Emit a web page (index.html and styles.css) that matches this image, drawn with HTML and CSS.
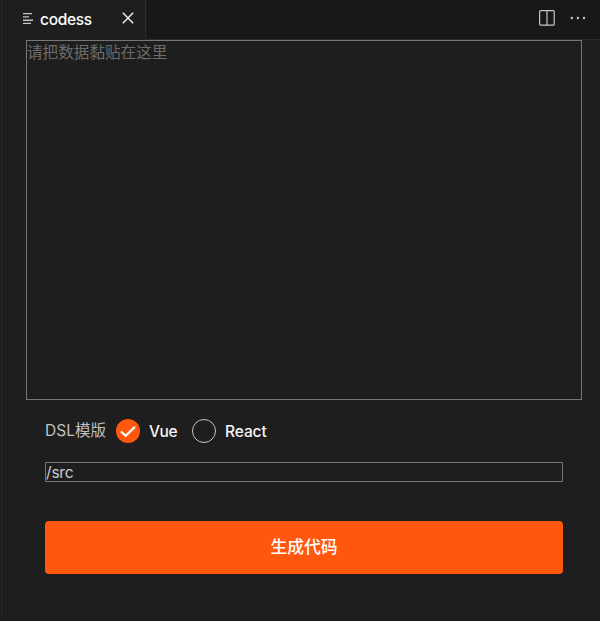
FILE: index.html
```html
<!DOCTYPE html>
<html lang="zh-CN">
<head>
<meta charset="utf-8">
<title>codess</title>
<link rel="stylesheet" href="styles.css">
</head>
<body>
<div class="window">
  <header class="tabbar">
    <div class="tab">
      <svg class="list-icon" width="12" height="12" viewBox="0 0 12 12"><path d="M0 .6h9M0 3.9h6M0 7.2h10M0 10.4h8"/></svg>
      <span class="tab-title">codess</span>
      <svg class="close-icon" width="12" height="12" viewBox="0 0 12 12"><path d="M.8.8l10.4 10.4M11.2.8L.8 11.2"/></svg>
    </div>
    <div class="actions">
      <svg width="16" height="16" viewBox="0 0 16 16"><rect x=".6" y=".6" width="14.6" height="14.6" rx="1"/><path d="M8 .6v14.6"/></svg>
      <svg class="dots" width="16" height="4" viewBox="0 0 16 4"><circle cx="1.8" cy="2" r="1.2"/><circle cx="7.9" cy="2" r="1.2"/><circle cx="14" cy="2" r="1.2"/></svg>
    </div>
  </header>
  <main class="content">
    <textarea class="data" placeholder="请把数据黏贴在这里"></textarea>
    <div class="options">
      <span class="label">DSL模版</span>
      <span class="radio checked"><svg width="24" height="24" viewBox="0 0 24 24"><path d="M4.8 12.5l4.9 4.2 9.2-8.8"/></svg></span>
      <span class="choice vue">Vue</span>
      <span class="radio"></span>
      <span class="choice">React</span>
    </div>
    <input class="path" type="text" value="/src">
    <button class="generate">生成代码</button>
  </main>
</div>
</body>
</html>
```

FILE: styles.css
```css
* {
  box-sizing: border-box;
}

body {
  margin: 0;
  background: #1e1e1e;
  font-family: Inter, "Noto Sans CJK SC", sans-serif;
}

.window {
  height: 621px;
  border-left: 1px solid #1a1a1a;
  border-bottom: 1px solid #191719;
  box-shadow: inset 1px 0 #2b2b2b;
}

.tabbar {
  display: flex;
  justify-content: space-between;
  height: 40px;
  background: #181818;
  box-shadow: inset 0 -1px #2b2b2b;
}

.tab {
  display: flex;
  width: 145px;
  height: 40px;
  padding-left: 22px;
  background: #1e1e1e;
  border-right: 1px solid #2b2b2b;
  box-shadow: inset 1px 0 #2b2b2b;
}

.list-icon {
  flex: none;
  margin-top: 13px;
  fill: none;
  stroke: #c5c5c5;
  stroke-width: 1.4;
}

.tab-title {
  flex: none;
  width: 87px;
  padding-left: 5px;
  color: #fff;
  font-size: 15.5px;
  font-weight: 500;
  letter-spacing: -0.3px;
  line-height: 40px;
}

.close-icon {
  flex: none;
  margin-top: 12px;
  fill: none;
  stroke: #f5f5f5;
  stroke-width: 1.4;
}

.actions {
  display: flex;
  gap: 15px;
  padding: 10px 14px 0 0;
  fill: none;
  stroke: #c5c5c5;
  stroke-width: 1.2;
}

.dots {
  margin-top: 6px;
  fill: #c5c5c5;
  stroke: none;
}

.content {
  display: flex;
  flex-direction: column;
  padding: 0 37px 0 44px;
}

.data {
  height: 360px;
  margin: 0 -19px;
  padding: 0;
  background: transparent;
  border: 1px solid #767676;
  border-radius: 0;
  color: #ccc;
  font: 15.6px/24px Inter, "Noto Sans CJK SC", sans-serif;
  resize: none;
}

.data::placeholder {
  color: #6c6c6c;
}

.options {
  display: flex;
  align-items: center;
  height: 24px;
  margin-top: 19px;
  font-size: 15.5px;
}

.label {
  width: 71px;
  color: #c0c0c0;
  font-size: 15.5px;
  line-height: 24px;
  white-space: nowrap;
}

.radio {
  flex: none;
  width: 24px;
  height: 24px;
  border: 1px solid #c4c4c4;
  border-radius: 50%;
}

.checked {
  background: #ff570e;
  border: 0;
}

.checked svg {
  display: block;
  fill: none;
  stroke: #fff;
  stroke-width: 2.2;
}

.choice {
  margin-left: 9px;
  color: #f5f5f5;
  font-weight: 500;
  letter-spacing: -0.1px;
}

.vue {
  width: 43px;
  letter-spacing: -0.4px;
}

.path {
  height: 20px;
  margin: 19px 0 0;
  padding: 0;
  background: transparent;
  border: 1px solid #767676;
  border-radius: 0;
  color: #ccc;
  font: 15.5px/18px Inter, "Noto Sans CJK SC", sans-serif;
  letter-spacing: -0.2px;
}

.generate {
  height: 53px;
  margin: 39px 0 0;
  padding: 0;
  background: #ff570e;
  border: 0;
  border-radius: 4px;
  color: #fff;
  font: 500 16.8px/53px Inter, "Noto Sans CJK SC", sans-serif;
}
```
